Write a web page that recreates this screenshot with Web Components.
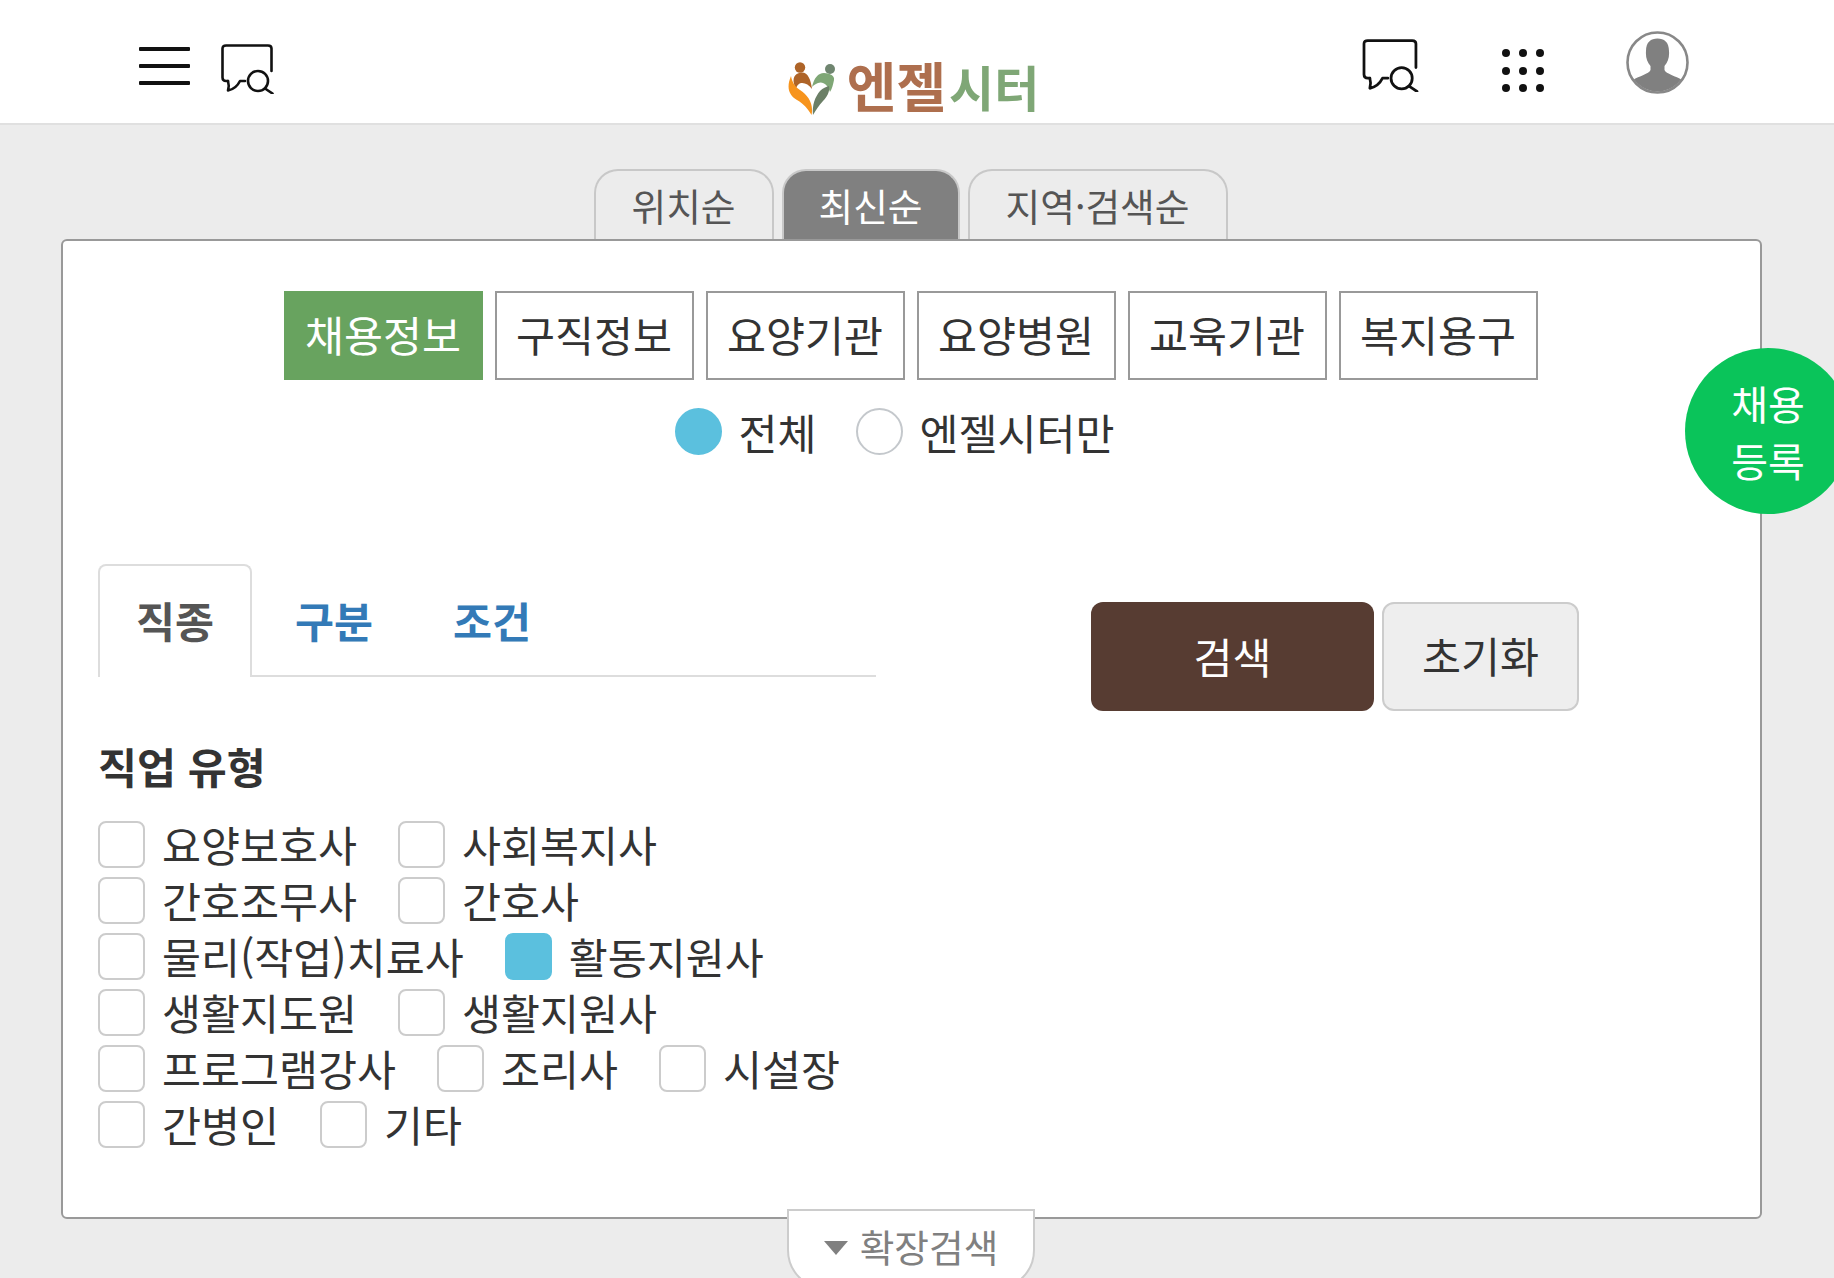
<!DOCTYPE html>
<html lang="ko">
<head>
<meta charset="utf-8">
<title>엔젤시터</title>
<style>
  html, body { margin: 0; height: 100%; overflow: hidden; }
  body {
    background: #ececec;
    color: #333;
    font-family: "Noto Sans CJK KR", "Noto Sans", sans-serif;
  }
</style>
</head>
<body>
<ac-header></ac-header>
<ac-sort-tabs></ac-sort-tabs>
<ac-panel>
  <ac-check>요양보호사</ac-check><ac-check>사회복지사</ac-check><br>
  <ac-check>간호조무사</ac-check><ac-check>간호사</ac-check><br>
  <ac-check>물리(작업)치료사</ac-check><ac-check checked>활동지원사</ac-check><br>
  <ac-check>생활지도원</ac-check><ac-check>생활지원사</ac-check><br>
  <ac-check>프로그램강사</ac-check><ac-check>조리사</ac-check><ac-check>시설장</ac-check><br>
  <ac-check>간병인</ac-check><ac-check>기타</ac-check>
</ac-panel>
<ac-expand>확장검색</ac-expand>
<ac-fab></ac-fab>

<script>
const chatSearchIcon = (w, h, cls = '') => `
  <svg class="${cls}" width="${w}" height="${h}" viewBox="0 0 53 50" fill="none" stroke="#111" stroke-width="2.6" stroke-linecap="round" stroke-linejoin="round">
    <path d="M7 37H5Q1.5 37 1.5 33.5V4.5Q1.5 1.5 5 1.5H47Q50.5 1.5 50.5 4.5V27"></path>
    <path d="M7 37Q8.5 42 7 46.5Q15 45 19 37H24"></path>
    <circle cx="37" cy="37" r="10"></circle>
    <path d="M44 44.5L51.5 49.5"></path>
  </svg>`;

class AcHeader extends HTMLElement {
  constructor() {
    super();
    this.attachShadow({ mode: 'open' });
  }

  connectedCallback() {
    this.shadowRoot.innerHTML = `
      <style>
        :host {
          display: grid;
          grid-template-columns: 1fr auto 1fr;
          box-sizing: border-box;
          height: 125px;
          padding: 0 145px 0 139px;
          background: #fff;
          border-bottom: 2px solid #e0e0e0;
        }
        .left, .right { display: flex; align-items: flex-start; }
        .left { padding-top: 44px; }
        .menu {
          display: flex;
          flex-direction: column;
          gap: 13px;
          width: 51px;
          margin: 3px 31px 0 0;
        }
        .menu span { display: block; height: 4px; background: #111; border-radius: 1px; }
        .right { justify-content: flex-end; padding-top: 31px; }
        .chat { margin-top: 8px; }
        .dots { margin: 18px 0 0 83px; }
        .avatar { margin: 0 0 0 80px; }
        .logo {
          display: flex;
          align-items: flex-start;
          padding-top: 58px;
          white-space: nowrap;
          font-family: "Noto Sans CJK KR", sans-serif;
        }
        .logo svg { margin: 4px 10px 0 -1px; }
        .angel { font-size: 54px; font-weight: 700; line-height: 54px; color: #ae6f4e; }
        .city { font-size: 49px; font-weight: 700; line-height: 50px; color: #7fa776; margin: 3px 0 0 3px; }
      </style>
      <div class="left">
        <div class="menu"><span></span><span></span><span></span></div>
        ${chatSearchIcon(53, 50)}
      </div>
      <div class="logo">
        <svg width="49" height="54" viewBox="0 0 49 54">
          <circle cx="12" cy="5.5" r="5.2" fill="#ae6428"></circle>
          <path d="M6 22C4 14 9 10.5 14 10.5C20 10.5 23 18 24 27C19 20 10 18 8 27Z" fill="#ae6428"></path>
          <path d="M3 14C-2 26 1 33 9 38C16 42 20 47 23.5 53C26 42 20 33 12 28C7 25 4 20 3 14Z" fill="#f7941d"></path>
          <circle cx="42" cy="7" r="5" fill="#6f8570"></circle>
          <path d="M24 25C26 16 30 11 36 11C42 11 47 14 46 18C45 23 44 27 42 30C40 23 35 19 30 21C27 22 25 24 24 25Z" fill="#7fa776"></path>
          <path d="M41 24C42 30 39 35 35 39C31 43 28 48 25 53C24 43 27 35 32 29C35 26 38 25 41 24Z" fill="#6b7f66"></path>
        </svg>
        <span class="angel">엔젤</span><span class="city">시터</span>
      </div>
      <div class="right">
        ${chatSearchIcon(57, 53, 'chat')}
        <svg class="dots" width="44" height="44" viewBox="0 0 44 44" fill="#111">
          <circle cx="4" cy="4" r="4"></circle><circle cx="21" cy="4" r="4"></circle><circle cx="38" cy="4" r="4"></circle>
          <circle cx="4" cy="22" r="4"></circle><circle cx="21" cy="22" r="4"></circle><circle cx="38" cy="22" r="4"></circle>
          <circle cx="4" cy="39" r="4"></circle><circle cx="21" cy="39" r="4"></circle><circle cx="38" cy="39" r="4"></circle>
        </svg>
        <svg class="avatar" width="63" height="63" viewBox="0 0 63 63">
          <defs><clipPath id="c"><circle cx="31.5" cy="31.5" r="29"></circle></clipPath></defs>
          <g clip-path="url(#c)" fill="#808080">
            <path d="M20 20C20 11 25 7.5 31.5 7.5C38 7.5 43 11 43 20C43.5 26 42 31 38.5 35V39C40 43 50 45 56 49V64H7V49C13 45 23 43 24.5 39V35C21 31 19.5 26 20 20Z"></path>
          </g>
          <circle cx="31.5" cy="31.5" r="30" fill="none" stroke="#888" stroke-width="2.6"></circle>
        </svg>
      </div>
    `;
  }
}

class AcSortTabs extends HTMLElement {
  constructor() {
    super();
    this.attachShadow({ mode: 'open' });
  }

  connectedCallback() {
    this.shadowRoot.innerHTML = `
      <style>
        :host {
          display: flex;
          justify-content: center;
          gap: 8px;
          width: 1699px;
          margin: 44px 0 0 61px;
          height: 70px;
          position: relative;
          z-index: 1;
        }
        div {
          box-sizing: border-box;
          height: 70px;
          padding-top: 4px;
          border: 2px solid #c8c8c8;
          border-bottom: 0;
          border-radius: 24px 24px 0 0;
          font-size: 37.7px;
          line-height: 60px;
          color: #555;
          text-align: center;
        }
        .on { background: #808080; color: #fff; }
      </style>
      <div style="width:180px">위치순</div>
      <div class="on" style="width:178px">최신순</div>
      <div style="width:260px">지역·검색순</div>
    `;
  }
}

class AcPanel extends HTMLElement {
  constructor() {
    super();
    this.attachShadow({ mode: 'open' });
  }

  connectedCallback() {
    const cats = ['채용정보', '구직정보', '요양기관', '요양병원', '교육기관', '복지용구'];
    this.shadowRoot.innerHTML = `
      <style>
        :host {
          display: block;
          box-sizing: border-box;
          width: 1701px;
          height: 980px;
          margin-left: 61px;
          padding: 50px 35px 0;
          background: #fff;
          border: 2px solid #999;
          border-radius: 6px;
          color: #333;
        }
        .cats { display: flex; justify-content: center; gap: 12px; margin-right: 2px; }
        .cat {
          box-sizing: border-box;
          width: 199px;
          height: 89px;
          border: 2px solid #999;
          font-size: 42.4px;
          line-height: 82px;
          text-align: center;
        }
        .cat.on { background: #68a35f; border-color: #68a35f; color: #fff; }
        .radios {
          display: flex;
          justify-content: center;
          align-items: center;
          gap: 39px;
          height: 46px;
          margin: 28px 34px 0 0;
          font-size: 42.4px;
        }
        .radio { display: flex; align-items: center; gap: 17px; line-height: 46px; }
        .radio span { position: relative; top: 1px; }
        .dot { box-sizing: border-box; width: 47px; height: 47px; border-radius: 50%; border: 2px solid #c4c8cc; }
        .dot.on { background: #5bc0de; border-color: #5bc0de; }
        .search { display: flex; margin-top: 110px; }
        .left { width: 778px; }
        .tabs { display: flex; height: 113px; border-bottom: 2px solid #ddd; box-sizing: border-box; }
        .tab {
          box-sizing: border-box;
          width: 154px;
          height: 113px;
          margin-right: 4px;
          font-size: 42.4px;
          font-weight: 700;
          line-height: 112px;
          text-align: center;
          color: #337ab7;
        }
        .tab.on {
          margin-right: 5px;
          color: #555;
          background: #fff;
          border: 2px solid #ddd;
          border-bottom: 0;
          border-radius: 8px 8px 0 0;
          line-height: 108px;
        }
        h3 { margin: 57px 0 0 0; font-size: 42.4px; font-weight: 700; line-height: 64px; color: #333; }
        .checks { margin-top: 18px; line-height: 0; width: 820px; }
        .buttons { display: flex; gap: 8px; margin: 38px 0 0 215px; }
        .btn {
          box-sizing: border-box;
          height: 109px;
          border-radius: 12px;
          font-size: 42.4px;
          line-height: 107px;
          text-align: center;
        }
        .btn.go { width: 283px; background: #573c32; color: #fff; }
        .btn.reset { width: 197px; background: #eee; border: 2px solid #ccc; color: #333; line-height: 101px; }
      </style>
      <div class="cats">
        ${cats.map((c, i) => `<div class="cat${i === 0 ? ' on' : ''}">${c}</div>`).join('')}
      </div>
      <div class="radios">
        <div class="radio"><div class="dot on"></div><span>전체</span></div>
        <div class="radio"><div class="dot"></div><span>엔젤시터만</span></div>
      </div>
      <div class="search">
        <div class="left">
          <div class="tabs">
            <div class="tab on">직종</div>
            <div class="tab">구분</div>
            <div class="tab">조건</div>
          </div>
          <h3>직업 유형</h3>
          <div class="checks"><slot></slot></div>
        </div>
        <div class="buttons">
          <div class="btn go">검색</div>
          <div class="btn reset">초기화</div>
        </div>
      </div>
    `;
  }
}

class AcCheck extends HTMLElement {
  constructor() {
    super();
    this.attachShadow({ mode: 'open' });
  }

  connectedCallback() {
    const checked = this.hasAttribute('checked');
    this.shadowRoot.innerHTML = `
      <style>
        :host {
          display: inline-flex;
          align-items: center;
          gap: 17px;
          height: 56px;
          margin-right: 41px;
          font-size: 42.4px;
          line-height: 58px;
          color: #333;
          white-space: nowrap;
        }
        .box {
          box-sizing: border-box;
          width: 47px;
          height: 47px;
          border: 2px solid #ccc;
          border-radius: 8px;
          background: ${checked ? '#5bc0de' : '#fff'};
          border-color: ${checked ? '#5bc0de' : '#ccc'};
        }
      </style>
      <div class="box"></div><slot></slot>
    `;
  }
}

class AcExpand extends HTMLElement {
  constructor() {
    super();
    this.attachShadow({ mode: 'open' });
  }

  connectedCallback() {
    this.shadowRoot.innerHTML = `
      <style>
        :host {
          display: flex;
          justify-content: center;
          align-items: center;
          gap: 12px;
          box-sizing: border-box;
          width: 248px;
          height: 81px;
          margin: -10px 0 0 787px;
          padding-bottom: 8px;
          background: #fff;
          border: 2px solid #ccc;
          border-radius: 0 0 40px 40px;
          font-size: 37.7px;
          line-height: 50px;
          color: #808080;
          position: relative;
        }
        i { width: 0; height: 0; border: 12px solid transparent; border-top: 14px solid #808080; border-bottom: 0; margin-top: 4px; }
      </style>
      <i></i><slot></slot>
    `;
  }
}

class AcFab extends HTMLElement {
  constructor() {
    super();
    this.attachShadow({ mode: 'open' });
  }

  connectedCallback() {
    this.shadowRoot.innerHTML = `
      <style>
        :host {
          position: absolute;
          left: 1685px;
          top: 348px;
          width: 166px;
          height: 166px;
          display: block;
          border-radius: 50%;
          background: #0ac45a;
          color: #fff;
          font-size: 40px;
          line-height: 57px;
          text-align: center;
          box-sizing: border-box;
          padding-top: 27px;
        }
      </style>
      채용<br>등록
    `;
  }
}

customElements.define('ac-header', AcHeader);
customElements.define('ac-sort-tabs', AcSortTabs);
customElements.define('ac-panel', AcPanel);
customElements.define('ac-check', AcCheck);
customElements.define('ac-expand', AcExpand);
customElements.define('ac-fab', AcFab);
</script>
</body>
</html>
